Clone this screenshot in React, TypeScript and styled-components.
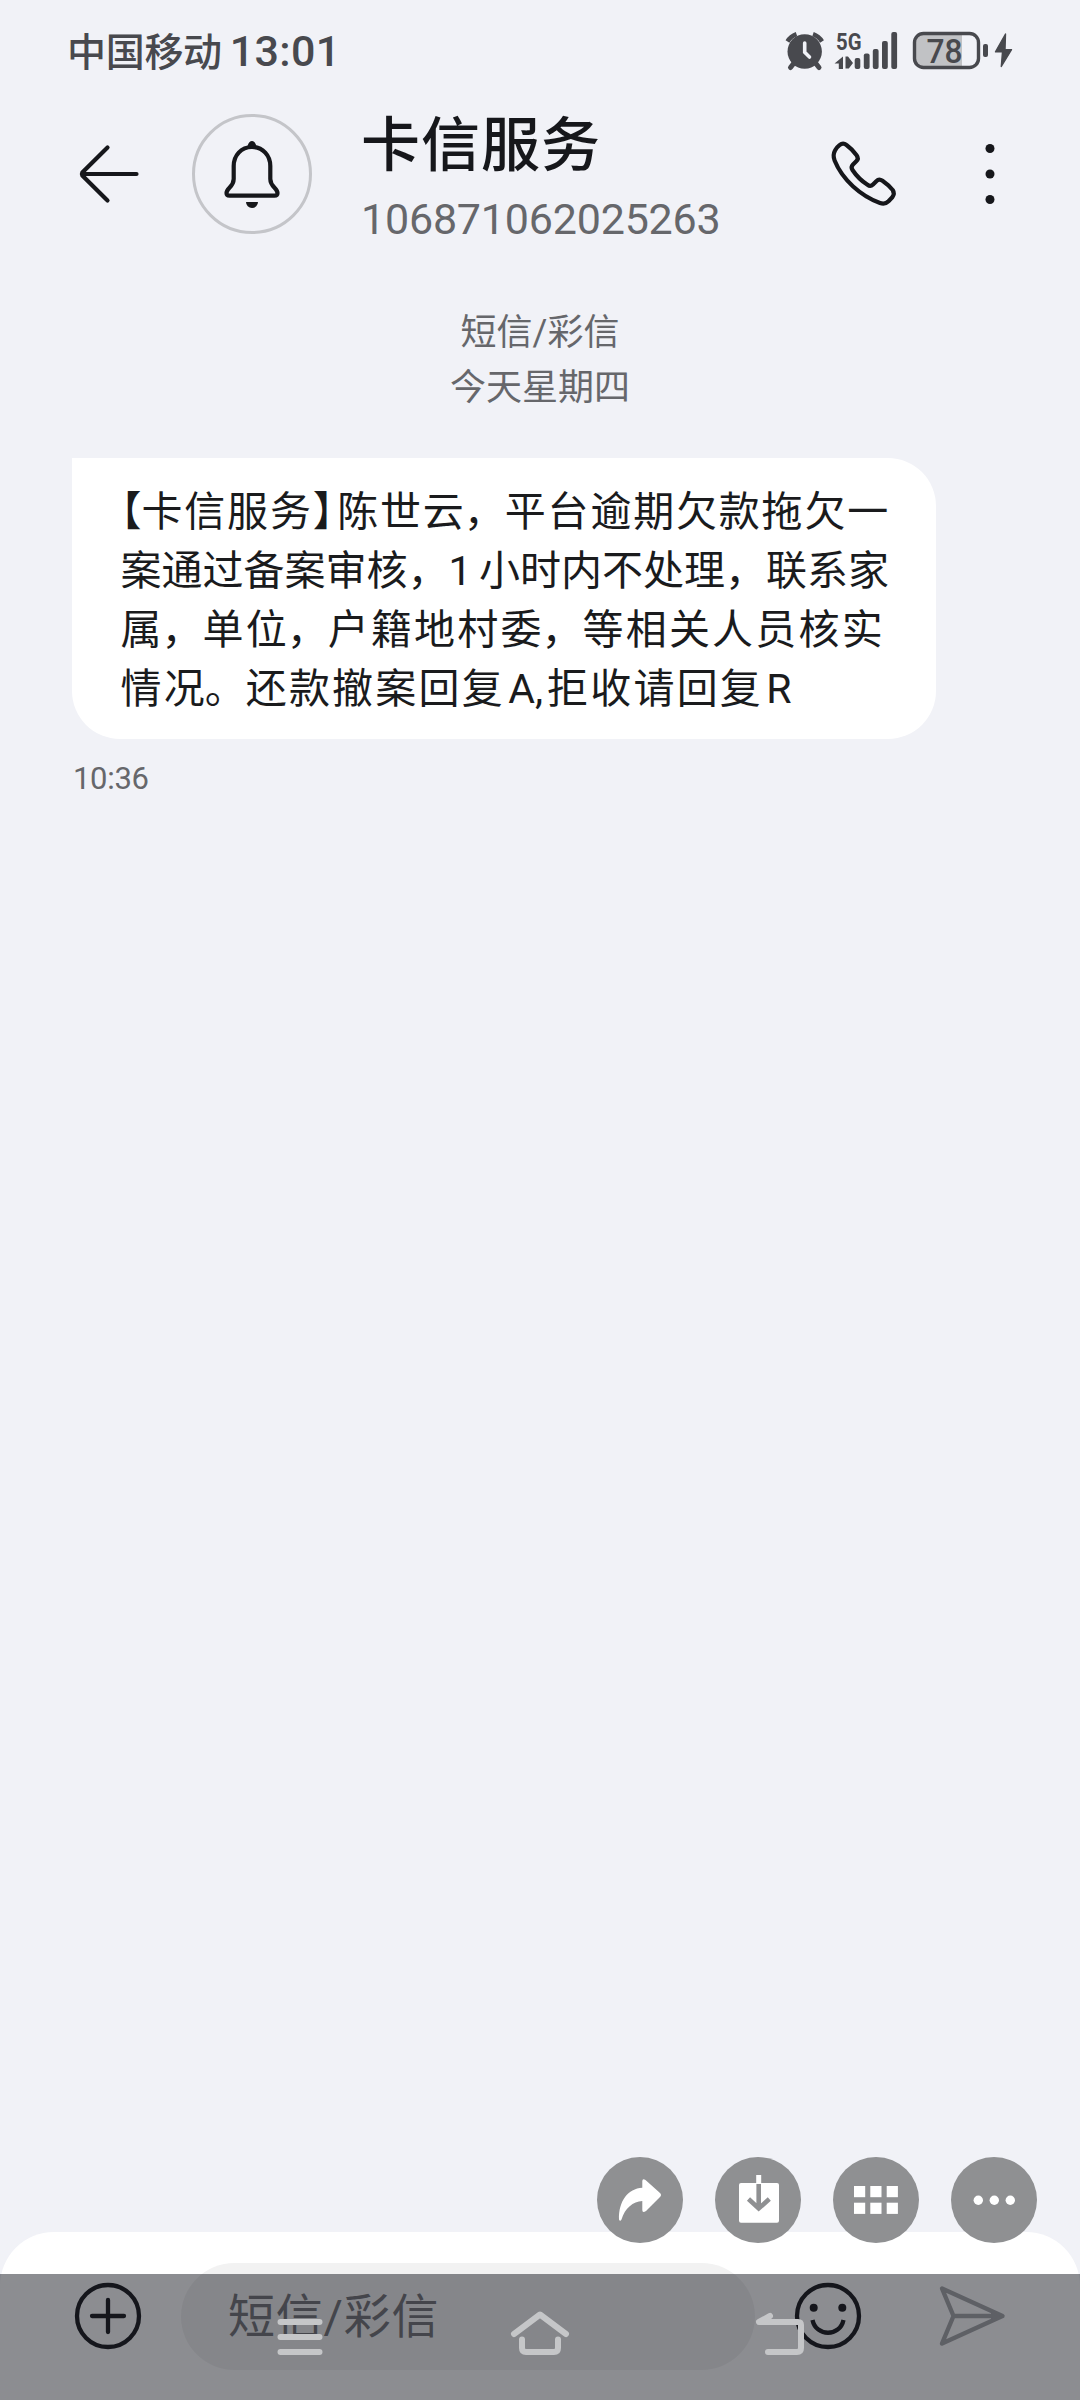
import React from "react";
import styled, { createGlobalStyle } from "styled-components";

const INK = "#16171b";
const STATUS = "#48494e";

const GlobalStyle = createGlobalStyle`
  html, body { margin: 0; padding: 0; background: #f1f2f7; }
  * { box-sizing: border-box; }
`;

const Screen = styled.div`
  position: relative;
  display: flex;
  flex-direction: column;
  width: 1080px;
  height: 2400px;
  overflow: hidden;
  background: #f1f2f7;
  font-family: Roboto, "Noto Sans CJK SC", sans-serif;
  color: ${INK};
`;

const Icon = styled.svg`
  display: block;
  flex: none;
  overflow: visible;
`;

const StatusBar = styled.div`
  display: flex;
  align-items: center;
  justify-content: space-between;
  height: 102px;
  padding: 0 64px 0 67px;
  color: ${STATUS};
`;

const Carrier = styled.div`
  display: flex;
  align-items: baseline;
  padding-top: 2px;
  white-space: nowrap;
  font-size: 39px;
  font-weight: 500;
  letter-spacing: -0.3px;
  line-height: 56px;
`;

const Clock = styled.span`
  margin-left: 8px;
  font-size: 43px;
  letter-spacing: 0.3px;
`;

const Header = styled.header`
  display: flex;
  align-items: center;
  height: 144px;
  padding: 0 82px 0 76px;
`;

const Avatar = styled.div`
  display: flex;
  align-items: center;
  justify-content: center;
  flex: none;
  width: 120px;
  height: 120px;
  margin-left: 52px;
  border: 3px solid #c4c5c9;
  border-radius: 50%;
`;

const Contact = styled.div`
  flex: 1;
  margin-left: 49px;
  padding-top: 9px;
  white-space: nowrap;
`;

const Name = styled.h1`
  margin: 0;
  font-size: 59px;
  font-weight: 500;
  letter-spacing: 1px;
  line-height: 80px;
`;

const Phone = styled.div`
  font-size: 43px;
  font-weight: 400;
  letter-spacing: -0.2px;
  line-height: 66px;
  color: #66676b;
`;

const Actions = styled.div`
  display: flex;
  align-items: center;
  gap: 84px;
`;

const DateBlock = styled.div`
  margin-top: 60px;
  text-align: center;
  font-size: 36px;
  line-height: 55px;
  color: #66676b;
`;

const Conversation = styled.main`
  display: flex;
  flex: 1;
  flex-direction: column;
  align-items: flex-start;
  padding: 41.5px 72px 0;
`;

const Bubble = styled.div`
  width: 864px;
  padding: 25px 0 20.5px 48.5px;
  border-radius: 0 48px 48px 48px;
  background: #fff;
  font-size: 41px;
  line-height: 59px;
  color: #1a1b1d;
`;

const Line = styled.div`
  white-space: nowrap;
`;

const Run = styled.span<{ $gap?: number; $half?: boolean; $lead?: number }>`
  letter-spacing: ${(p) => p.$gap ?? 0}px;
  margin-left: ${(p) => p.$lead ?? 0}px;
  font-feature-settings: ${(p) => (p.$half ? '"halt"' : "normal")};
`;

const Time = styled.div`
  margin-top: 18px;
  padding-left: 1px;
  font-size: 31px;
  letter-spacing: -0.3px;
  line-height: 44px;
  color: #66676b;
`;

const Composer = styled.footer`
  display: flex;
  align-items: center;
  height: 168px;
  padding: 0 74px 0 72px;
  border-radius: 54px 54px 0 0;
  background: #fff;
`;

const Field = styled.div`
  flex: none;
  width: 574px;
  height: 107px;
  margin: 0 38px 0 37px;
  padding-left: 47px;
  border-radius: 54px;
  background: #f2f2f2;
  font-size: 47px;
  line-height: 108px;
  letter-spacing: 0.8px;
  color: #727377;
`;

const SendSlot = styled.div`
  margin-left: 75px;
`;

const NavBar = styled.nav`
  position: absolute;
  left: 0;
  right: 0;
  bottom: 0;
  display: flex;
  align-items: center;
  justify-content: center;
  gap: 180px;
  height: 126px;
  background: rgba(20, 22, 31, 0.49);
`;

const Floating = styled.div`
  position: absolute;
  top: 2157px;
  right: 43px;
  display: flex;
  gap: 32px;
`;

const Round = styled.button`
  display: block;
  width: 86px;
  height: 86px;
  padding: 0;
  border: 0;
  border-radius: 50%;
  background: #8f9092;
`;

const StatusIcons = () => (
  <Icon width="230" height="44" viewBox="786 29 230 44" fill={STATUS}>
    <circle cx="804.7" cy="51.5" r="17.2" />
    <path
      d="M787.5 41.5 A17 17 0 0 1 796.5 34.2 M813 34.2 A17 17 0 0 1 822 41.5"
      fill="none"
      stroke={STATUS}
      strokeWidth="4.5"
    />
    <path d="M794 63 L790.5 67.5 M815.5 63 L819 67.5" stroke={STATUS} strokeWidth="5" strokeLinecap="round" />
    <path d="M804.7 43 V52.3 L809.5 57" fill="none" stroke="#f1f2f7" strokeWidth="3.6" strokeLinecap="round" />
    <text x="836" y="50" fontSize="24" fontWeight="700" textLength="25.5" lengthAdjust="spacingAndGlyphs">
      5G
    </text>
    <path d="M834.5 63.5 L843 56.5 V69 H838.8 V63.5 Z M845.5 56.5 H848 L853 63 L848.8 68.5 H845.5 Z" />
    <rect x="854.7" y="58" width="5.6" height="11" rx="2" />
    <rect x="863.8" y="53.5" width="5.8" height="15.5" rx="2" />
    <rect x="872.8" y="49" width="5.8" height="20" rx="2" />
    <rect x="882" y="41" width="5.8" height="28" rx="2" />
    <rect x="891.3" y="32" width="5.8" height="37" rx="2" />
    <path d="M923 33.5 H962 V67.5 H923 Q914.5 67.5 914.5 59 V42 Q914.5 33.5 923 33.5 Z" fill="#c1c2c5" />
    <rect x="914.5" y="33.5" width="64" height="34" rx="9" fill="none" stroke={STATUS} strokeWidth="3.4" />
    <text x="926.5" y="62.5" fontSize="33" fontWeight="500" textLength="36" lengthAdjust="spacingAndGlyphs">
      78
    </text>
    <rect x="983" y="44" width="5" height="13" rx="2" />
    <path
      d="M1005.5 34 L995.5 51.8 H1002.5 L1001.3 66.5 L1011.5 49.7 H1005 Z"
      stroke={STATUS}
      strokeWidth="1.4"
      strokeLinejoin="round"
    />
  </Icon>
);

const BackArrow = () => (
  <Icon width="64" height="60" viewBox="76 144 64 60" fill="none" stroke={INK} strokeWidth="4.2" strokeLinecap="round" strokeLinejoin="round">
    <path d="M136.5 174 H82.3 M107.5 147.5 L82.3 172.5 Q81.5 174 82.3 175.5 L107.5 200.5" />
  </Icon>
);

const Bell = () => (
  <Icon width="58" height="70" viewBox="223 139 58 70" fill="none" stroke={INK} strokeWidth="4.2" strokeLinejoin="round">
    <path d="M252 147 C241 147 233.7 155.5 233.7 166 V179 C233.7 187 226.5 188 226.5 193 Q226.5 195.7 229.5 195.7 H274.5 Q277.5 195.7 277.5 193 C277.5 188 270.3 187 270.3 179 V166 C270.3 155.5 263 147 252 147 Z" />
    <path d="M247.5 146 Q249 141 252 141 Q255 141 256.5 146 Z M246 202 H258 A6 6 0 0 1 246 202 Z" fill={INK} stroke="none" />
  </Icon>
);

const Handset = () => (
  <Icon width="68" height="68" viewBox="830 140 68 68" fill="none" stroke={INK} strokeWidth="4.2" strokeLinejoin="round">
    <path d="M839.5 145.2 Q843 142.3 846.5 145 Q852 149 856.6 155.2 Q859 158.5 856.5 161 L853 164.5 Q850.5 167 852.5 170 Q858.5 179 867.5 184.8 Q870.5 187 873 184.5 L876.3 181.2 Q879 178.4 882.5 180.8 Q888.5 185 892.7 190 Q895 193.5 892.3 197.3 L888.5 201.3 Q885 204.8 880 203 C861 196 842.5 180 834.6 160.5 Q832.5 155 835 150.5 Q836.5 147.5 839.5 145.2 Z" />
  </Icon>
);

const More = () => (
  <Icon width="16" height="64" viewBox="982 142 16 64" fill={INK}>
    <circle cx="990" cy="148.5" r="4.5" />
    <circle cx="990" cy="174" r="4.5" />
    <circle cx="990" cy="199.5" r="4.5" />
  </Icon>
);

const Plus = () => (
  <Icon width="72" height="72" viewBox="72 2280 72 72" fill="none" stroke={INK} strokeWidth="4.3" strokeLinecap="round">
    <circle cx="108" cy="2316" r="31" />
    <path d="M92 2316 H124 M108 2300 V2332" />
  </Icon>
);

const Smiley = () => (
  <Icon width="70" height="72" viewBox="793 2280 70 72" fill="none" stroke={INK} strokeWidth="4.3">
    <circle cx="828" cy="2316" r="31" />
    <path d="M812.5 2320 C816 2337 840 2337 843.5 2320" />
    <circle cx="813.7" cy="2307.7" r="4" fill={INK} stroke="none" />
    <circle cx="842.3" cy="2307.7" r="4" fill={INK} stroke="none" />
  </Icon>
);

const Send = () => (
  <Icon width="68" height="64" viewBox="938 2284 68 64" fill="none" stroke="#a6a7aa" strokeWidth="4.4" strokeLinejoin="round">
    <path d="M942 2288.5 L1002.5 2316 L942 2343.5 L953.5 2316 Z M953.5 2316 H1002" />
    <path d="M991 2312.5 L1002.5 2316 L991 2319.5 Z" fill="#a6a7aa" stroke="none" />
  </Icon>
);

const navStroke = {
  fill: "none",
  stroke: "#c5c6c8",
  strokeWidth: 6,
  strokeLinecap: "round" as const,
  strokeLinejoin: "round" as const,
};

const App = () => (
  <Screen>
    <GlobalStyle />
    <StatusBar>
      <Carrier>
        中国移动<Clock>13:01</Clock>
      </Carrier>
      <StatusIcons />
    </StatusBar>

    <Header>
      <BackArrow />
      <Avatar>
        <Bell />
      </Avatar>
      <Contact>
        <Name>卡信服务</Name>
        <Phone>106871062025263</Phone>
      </Contact>
      <Actions>
        <Handset />
        <More />
      </Actions>
    </Header>

    <DateBlock>
      <div>短信/彩信</div>
      <div>今天星期四</div>
    </DateBlock>

    <Conversation>
      <Bubble>
        <Line>
          <Run $half $lead={0.5}>【</Run>
          <Run $gap={1.8}>卡信服务</Run>
          <Run $half $gap={4}>】</Run>
          <Run $gap={1.8}>陈世</Run>
          <Run>云，</Run>
          <Run $gap={1.8}>平台逾期欠款拖欠一</Run>
        </Line>
        <Line>
          <Run>案通过备案审核，</Run>
          <Run $gap={7.5}>1</Run>
          <Run>小时内不处理，联系家</Run>
        </Line>
        <Line>
          <Run>属，</Run>
          <Run $gap={2.2}>单</Run>
          <Run>位，</Run>
          <Run $gap={2.2}>户籍地村</Run>
          <Run>委，</Run>
          <Run $gap={2.2}>等相关人员核实</Run>
        </Line>
        <Line>
          <Run $gap={2.2}>情</Run>
          <Run>况。</Run>
          <Run $gap={2.2}>还款撤案回</Run>
          <Run $gap={5.5}>复</Run>
          <Run>A</Run>
          <Run $gap={4}>,</Run>
          <Run $gap={2.2}>拒收请回</Run>
          <Run $gap={5.5}>复</Run>
          <Run>R</Run>
        </Line>
      </Bubble>
      <Time>10:36</Time>
    </Conversation>

    <Composer>
      <Plus />
      <Field>短信/彩信</Field>
      <Smiley />
      <SendSlot>
        <Send />
      </SendSlot>
    </Composer>

    <NavBar>
      <Icon width="60" height="50" viewBox="270 2312 60 50" {...navStroke}>
        <path d="M280.5 2322 H319.5 M280.5 2337 H319.5 M280.5 2352 H319.5" />
      </Icon>
      <Icon width="60" height="50" viewBox="510 2312 60 50" {...navStroke}>
        <path d="M514 2334 L540 2314.5 L566 2334 M522 2339.5 V2348 Q522 2352 526 2352 H554 Q558 2352 558 2348 V2339.5" />
      </Icon>
      <Icon width="60" height="50" viewBox="750 2312 60 50" {...navStroke}>
        <path d="M770 2316 L759 2322 H798 Q801 2322 801 2325 V2348 Q801 2352 797 2352 H768" />
      </Icon>
    </NavBar>

    <Floating>
      <Round>
        <Icon width="86" height="86" viewBox="597 2157 86 86" fill="#fff">
          <path d="M619 2219.5 C618.5 2201 628 2188.5 642.3 2187.7 V2181 Q642.5 2178 645.5 2180 L660 2193 Q662 2195 660 2197 L646 2211 Q642.3 2213.5 642.3 2210 V2201 C633 2201.5 625 2208 621.5 2219.5 Q620 2222 619 2219.5 Z" />
        </Icon>
      </Round>
      <Round>
        <Icon width="86" height="86" viewBox="715 2157 86 86">
          <rect x="739" y="2183" width="40" height="39.7" rx="2" fill="#fff" />
          <rect x="756.2" y="2175" width="5" height="9" fill="#fff" />
          <path d="M758.7 2184 V2208 M748.5 2199 L758.7 2208.5 L769.3 2199" fill="none" stroke="#8f9092" strokeWidth="4.6" />
        </Icon>
      </Round>
      <Round>
        <Icon width="86" height="86" viewBox="833 2157 86 86" fill="#fff">
          {[854, 870.3, 886.7].map((x) =>
            [2186, 2202.7].map((y) => <rect key={`${x}-${y}`} x={x} y={y} width="11.2" height="11.2" />)
          )}
        </Icon>
      </Round>
      <Round>
        <Icon width="86" height="86" viewBox="951 2157 86 86" fill="#fff">
          {[978.3, 994.3, 1010.3].map((x) => (
            <circle key={x} cx={x} cy="2200.3" r="4.7" />
          ))}
        </Icon>
      </Round>
    </Floating>
  </Screen>
);

export default App;
